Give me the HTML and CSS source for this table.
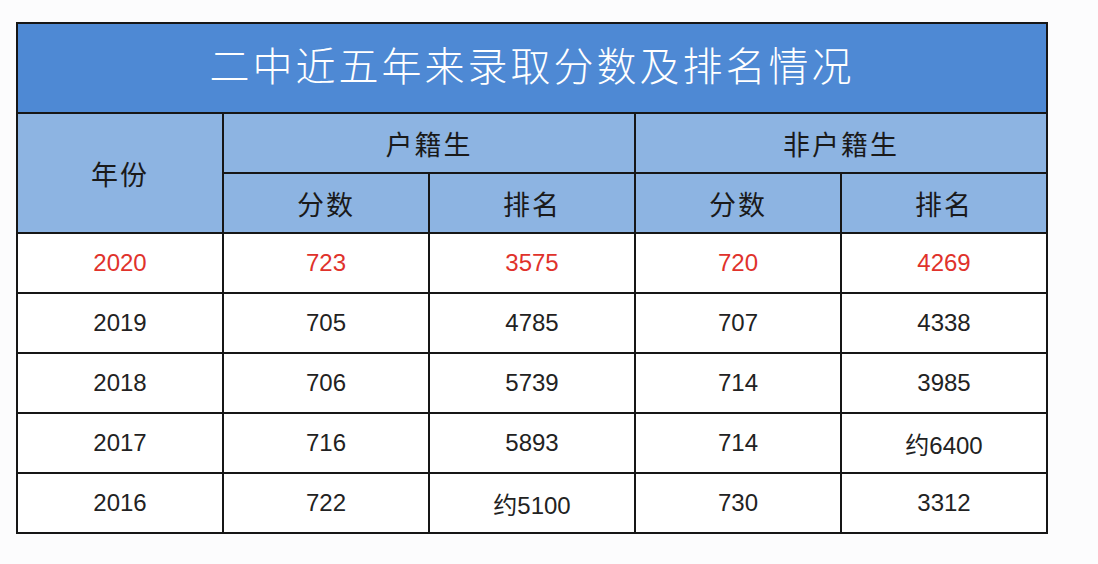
FILE: index.html
```html
<!DOCTYPE html>
<html lang="zh">
<head>
<meta charset="utf-8">
<link rel="stylesheet" href="styles.css">
</head>
<body>
<table class="score-table">
  <colgroup>
    <col class="c"><col class="c"><col class="c"><col class="c"><col class="c">
  </colgroup>
  <thead>
    <tr class="title-row"><th colspan="5">二中近五年来录取分数及排名情况</th></tr>
    <tr class="head-row">
      <th rowspan="2">年份</th>
      <th colspan="2">户籍生</th>
      <th colspan="2">非户籍生</th>
    </tr>
    <tr class="head-row">
      <th>分数</th><th>排名</th><th>分数</th><th>排名</th>
    </tr>
  </thead>
  <tbody>
    <tr class="hl"><td>2020</td><td>723</td><td>3575</td><td>720</td><td>4269</td></tr>
    <tr><td>2019</td><td>705</td><td>4785</td><td>707</td><td>4338</td></tr>
    <tr><td>2018</td><td>706</td><td>5739</td><td>714</td><td>3985</td></tr>
    <tr><td>2017</td><td>716</td><td>5893</td><td>714</td><td>约6400</td></tr>
    <tr><td>2016</td><td>722</td><td>约5100</td><td>730</td><td>3312</td></tr>
  </tbody>
</table>
</body>
</html>
```
FILE: styles.css
```css
html, body {
  margin: 0;
  padding: 0;
  background: #fcfcfd;
}
body {
  padding: 22px 0 0 16px;
  font-family: "Liberation Sans", "Noto Sans CJK SC", sans-serif;
}
.score-table {
  border-collapse: collapse;
  table-layout: fixed;
  width: 1032px;
}
.score-table .c { width: 206px; }
.score-table th,
.score-table td {
  border: 2px solid #161616;
  text-align: center;
  vertical-align: middle;
  padding: 0;
  font-weight: normal;
}
.title-row th {
  height: 80px;
  padding-bottom: 8px;
  background: #4e89d4;
  color: #ffffff;
  font-family: "Noto Sans CJK SC", sans-serif;
  font-size: 40px;
  letter-spacing: 3px;
  font-weight: 300;
}
.head-row th {
  height: 58px;
  background: #8db4e2;
  color: #1a1a1a;
  font-family: "Noto Sans CJK SC", sans-serif;
  font-size: 27px;
  letter-spacing: 2px;
}
.score-table td {
  height: 58px;
  background: #ffffff;
  color: #222222;
  font-size: 24px;
}
.hl td {
  color: #e0322b;
}
```
